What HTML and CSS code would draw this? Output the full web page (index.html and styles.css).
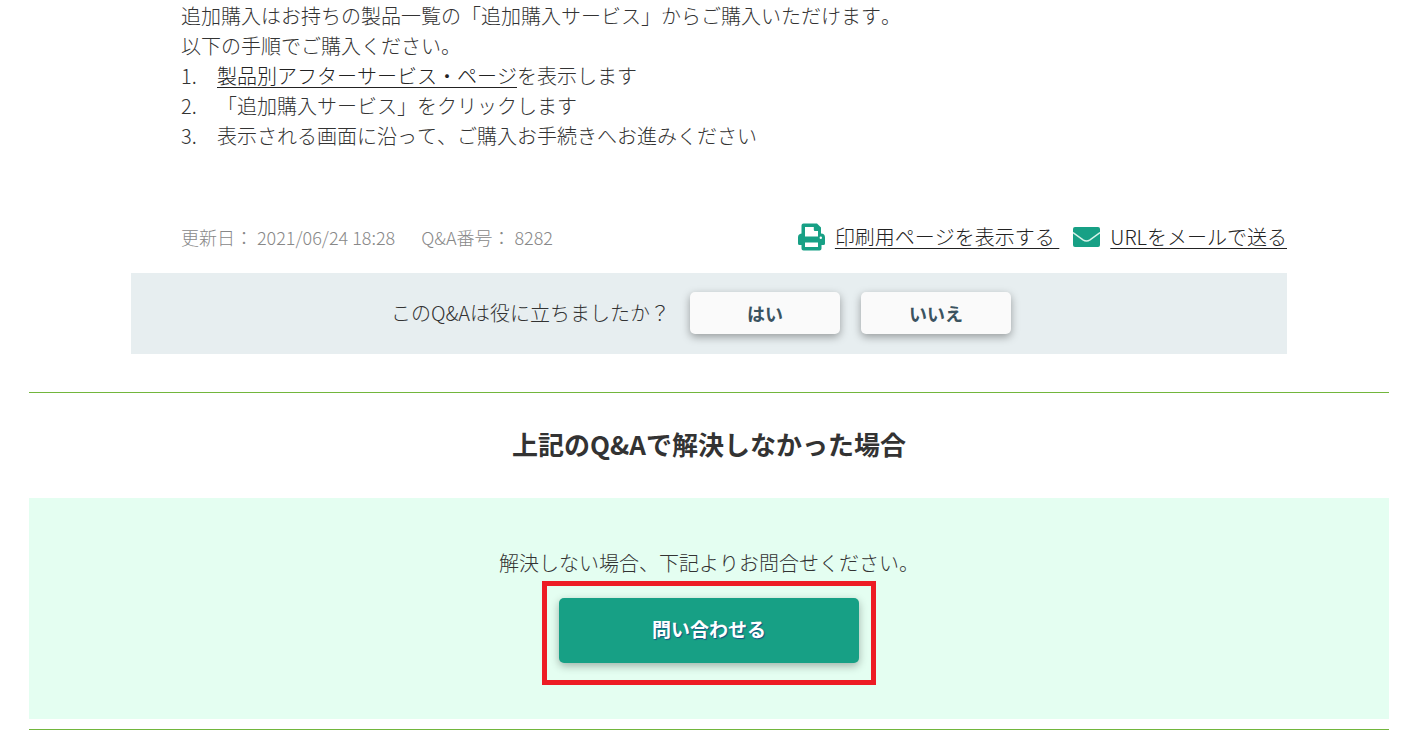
FILE: index.html
```html
<!DOCTYPE html>
<html lang="ja">
<head>
<meta charset="utf-8">
<meta name="viewport" content="width=device-width, initial-scale=1">
<title>Q&amp;A 8282</title>
<link rel="stylesheet" href="styles.css">
</head>
<body>
<main class="page">
  <article class="article">
    <div class="answer">
      <p class="text">追加購入はお持ちの製品一覧の「追加購入サービス」からご購入いただけます。</p>
      <p class="text">以下の手順でご購入ください。</p>
      <ol class="steps">
        <li class="step"><span class="step-number">1.</span><span><a class="link" href="#">製品別アフターサービス・ページ</a>を表示します</span></li>
        <li class="step"><span class="step-number">2.</span><span>「追加購入サービス」をクリックします</span></li>
        <li class="step"><span class="step-number">3.</span><span>表示される画面に沿って、ご購入お手続きへお進みください</span></li>
      </ol>
    </div>
    <div class="meta">
      <div class="meta-info">
        <span>更新日： 2021/06/24 18:28</span>
        <span>Q&amp;A番号： 8282</span>
      </div>
      <div class="meta-actions">
        <span class="action">
          <svg class="icon" viewBox="0 0 27 28" aria-hidden="true">
            <path fill="#17a085" fill-rule="evenodd" d="M5.500 .5H19L23 4.500V10.500A4 4 0 0 1 27 14.500V20.500a1.500 1.500 0 0 1-1.500 1.500H23.500V25.500a2 2 0 0 1-2 2h-16a2 2 0 0 1-2-2V22H1.500A1.500 1.500 0 0 1 0 20.500v-6a4 4 0 0 1 3.500-4V2.500a2 2 0 0 1 2-2zM7 4V13.500H20V8H17A1.200 1.200 0 0 1 15.800 6.800V4zM7 19.500V24H20V19.500zM22.800 13.500a1.200 1.200 0 1 0 0 2.400 1.200 1.200 0 0 0 0-2.400z"/>
          </svg>
          <a class="link" href="#">印刷用ページを表示する&nbsp;</a>
        </span>
        <span class="action">
          <svg class="icon" viewBox="0 0 27 28" aria-hidden="true">
            <rect x="0" y="4" width="27" height="20" rx="2" fill="#17a085"/>
            <path d="M0 9.500l10 7.300q3.500 2.400 7 0L27 9.500" fill="none" stroke="#d8f3ea" stroke-width="1.500"/>
          </svg>
          <a class="link" href="#">URLをメールで送る</a>
        </span>
      </div>
    </div>
    <div class="feedback">
      <p class="text">このQ&amp;Aは役に立ちましたか？</p>
      <div class="choices">
        <button class="choice" type="button">はい</button>
        <button class="choice" type="button">いいえ</button>
      </div>
    </div>
  </article>
  <section class="unresolved">
    <h2 class="heading">上記のQ&amp;Aで解決しなかった場合</h2>
    <div class="contact">
      <p class="text">解決しない場合、下記よりお問合せください。</p>
      <div class="highlight">
        <button class="contact-button" type="button">問い合わせる</button>
      </div>
    </div>
  </section>
</main>
</body>
</html>
```
FILE: styles.css
```css
* {
  box-sizing: border-box;
}

body {
  margin: 0;
  background: #fff;
  color: #333;
  font-family: "Noto Sans CJK JP", sans-serif;
  font-size: 20px;
  font-weight: 300;
  font-kerning: none;
  line-height: 30px;
}

button {
  border: 0;
  font: inherit;
  font-weight: 700;
  border-radius: 5px;
  cursor: pointer;
}

.page {
  max-width: 1360px;
  margin: 0 auto;
}

.article {
  width: 85%;
  margin: 0 auto;
  padding: 1px 0 38px;
}

.answer {
  padding: 0 50px;
}

.text {
  margin: 0;
}

.steps {
  margin: 0;
  padding: 0;
  list-style: none;
}

.step {
  display: flex;
}

.step-number {
  flex: 0 0 36px;
}

.link {
  color: #222;
  text-decoration: underline 1px;
  text-decoration-skip-ink: none;
  text-underline-offset: 3px;
}

.meta {
  display: flex;
  flex-wrap: wrap;
  justify-content: space-between;
  align-items: center;
  padding: 71px 0 21px 50px;
}

.meta-info {
  display: flex;
  gap: 26px;
  color: #888;
  font-size: 18px;
}

.meta-actions {
  display: flex;
  gap: 14px;
}

.action {
  display: flex;
  align-items: center;
  gap: 10px;
}

.icon {
  width: 27px;
  height: 28px;
}

.feedback {
  display: flex;
  flex-wrap: wrap;
  justify-content: center;
  align-items: center;
  gap: 20px;
  padding: 19px 32px 20px 16px;
  background: #e7eef0;
}

.choices {
  display: flex;
  gap: 21px;
}

.choice {
  width: 150px;
  height: 42px;
  background: #fafafa;
  color: #3b5360;
  font-size: 18px;
  box-shadow: 0 3px 8px rgba(0, 0, 0, 0.35);
}

.unresolved {
  padding-bottom: 10px;
  border-top: 1px solid #72b63c;
  border-bottom: 1px solid #72b63c;
}

.heading {
  margin: 0;
  padding: 31px 0 34px;
  font-size: 26px;
  font-weight: 700;
  line-height: 40px;
  text-align: center;
}

.contact {
  display: flex;
  flex-direction: column;
  align-items: center;
  padding: 50px 16px 34px;
  background: #e4fef1;
}

.highlight {
  margin-top: 3px;
  padding: 12px 12px 17px;
  border: 5px solid #ed1c24;
}

.contact-button {
  width: 300px;
  height: 65px;
  padding-bottom: 4px;
  background: #17a085;
  color: #fff;
  font-size: 19px;
  text-shadow: 1px 1px 1px #164e80;
  box-shadow: 0 3px 8px rgba(0, 0, 0, 0.3);
}
```
